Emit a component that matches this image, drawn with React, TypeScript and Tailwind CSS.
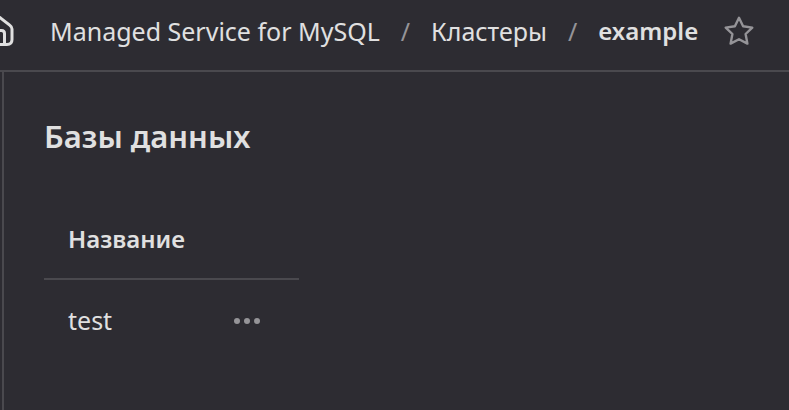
function HomeIcon() {
  return (
    <svg width="30" height="32" viewBox="0 0 30 32" fill="none" stroke="currentColor" strokeWidth="3" strokeLinejoin="round" aria-hidden="true">
      <path d="M2.500 13.500Q2.500 11.500 4 10.400L13.300 3.100Q15 1.800 16.700 3.100L26 10.400Q28 11.800 28 14V24.500Q28 29.500 23 29.500H7.500Q2.500 29.500 2.500 24.500Z" />
      <path d="M10.500 29V18.500Q10.500 15.500 13.500 15.500H17.500Q20.500 15.500 20.500 18.500V29" />
    </svg>
  );
}

function StarIcon() {
  return (
    <svg width="30" height="30" viewBox="0 0 30 30" fill="none" stroke="currentColor" strokeWidth="2.400" strokeLinejoin="round" aria-hidden="true">
      <path d="M15 1.800L19.100 10.200L28.300 11.600L21.600 18L23.400 27.600L15 23.200L6.600 27.600L8.400 18L1.700 11.600L10.900 10.200Z" />
    </svg>
  );
}

function DotsIcon() {
  return (
    <svg width="28" height="6" viewBox="0 0 28 6" fill="currentColor" aria-hidden="true">
      <circle cx="4" cy="3" r="3" />
      <circle cx="14" cy="3" r="3" />
      <circle cx="24" cy="3" r="3" />
    </svg>
  );
}

export default function App() {
  return (
    <div className="flex min-h-screen flex-col overflow-hidden bg-[#2d2c32] font-['Noto_Sans','Open_Sans',sans-serif] text-[25px] leading-9 text-[#e0e0e0]">
      <header className="flex h-18 items-center border-b-2 border-[#4a494e] pb-2">
        <nav aria-label="Навигация" className="-ml-4 flex items-center whitespace-nowrap">
          <a href="#home" aria-label="Главная" className="mr-9">
            <HomeIcon />
          </a>
          <a href="#service">Managed Service for MySQL</a>
          <span className="mx-[21px] text-[#959498]">/</span>
          <a href="#clusters">Кластеры</a>
          <span className="mx-[21px] text-[#959498]">/</span>
          <a href="#example" aria-current="page" className="text-[24px] font-semibold">example</a>
        </nav>
        <button type="button" aria-label="В избранное" className="ml-[26px] text-[#959498]">
          <StarIcon />
        </button>
      </header>
      <main className="ml-0.5 flex-1 border-l-2 border-[#4a494e] px-10 pt-10">
        <h1 className="text-[31px] leading-12 font-semibold">Базы данных</h1>
        <table className="mt-[39px] w-[255px] border-collapse text-left">
          <thead>
            <tr className="h-20 border-b-2 border-[#4a494e]">
              <th scope="col" colSpan={2} className="px-6 text-[24px] font-semibold">Название</th>
            </tr>
          </thead>
          <tbody>
            <tr className="h-20">
              <td className="pl-6">test</td>
              <td className="pr-[38px] text-right">
                <button type="button" aria-label="Действия" className="inline-flex h-9 items-center align-middle text-[#959498]">
                  <DotsIcon />
                </button>
              </td>
            </tr>
          </tbody>
        </table>
      </main>
    </div>
  );
}
